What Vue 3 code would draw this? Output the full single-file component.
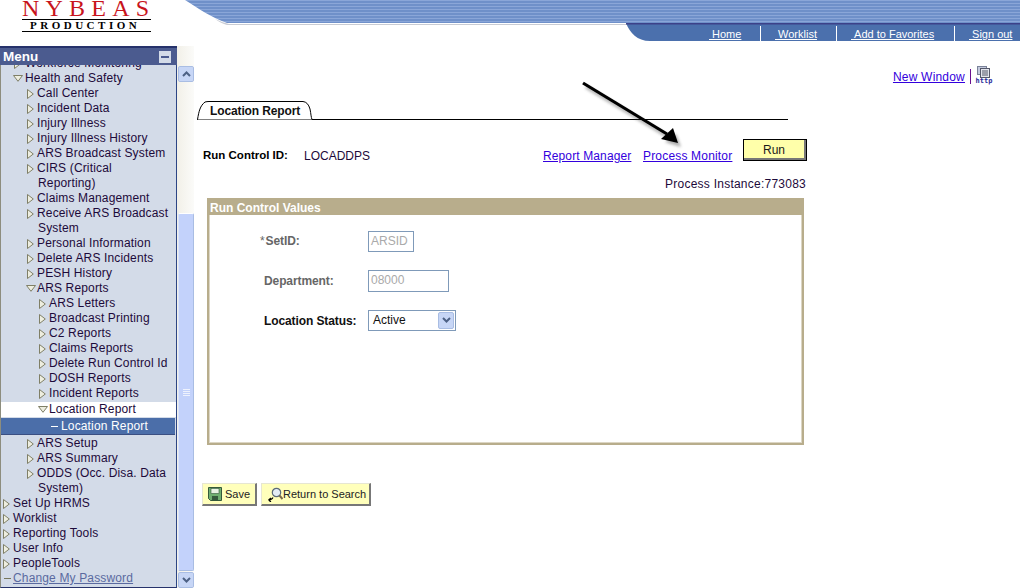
<script setup>
const rows = [
  { t: 'Workforce Monitoring', l: 1, a: 'r' },
  { t: 'Health and Safety', l: 1, a: 'd' },
  { t: 'Call Center', l: 2, a: 'r' },
  { t: 'Incident Data', l: 2, a: 'r' },
  { t: 'Injury Illness', l: 2, a: 'r' },
  { t: 'Injury Illness History', l: 2, a: 'r' },
  { t: 'ARS Broadcast System', l: 2, a: 'r' },
  { t: 'CIRS (Critical Reporting)', l: 2, a: 'r' },
  { t: 'Claims Management', l: 2, a: 'r' },
  { t: 'Receive ARS Broadcast System', l: 2, a: 'r' },
  { t: 'Personal Information', l: 2, a: 'r' },
  { t: 'Delete ARS Incidents', l: 2, a: 'r' },
  { t: 'PESH History', l: 2, a: 'r' },
  { t: 'ARS Reports', l: 2, a: 'd' },
  { t: 'ARS Letters', l: 3, a: 'r' },
  { t: 'Broadcast Printing', l: 3, a: 'r' },
  { t: 'C2 Reports', l: 3, a: 'r' },
  { t: 'Claims Reports', l: 3, a: 'r' },
  { t: 'Delete Run Control Id', l: 3, a: 'r' },
  { t: 'DOSH Reports', l: 3, a: 'r' },
  { t: 'Incident Reports', l: 3, a: 'r' },
  { t: 'Location Report', l: 3, a: 'd', open: true },
  { t: 'Location Report', l: 4, a: 'dash', current: true },
  { t: 'ARS Setup', l: 2, a: 'r' },
  { t: 'ARS Summary', l: 2, a: 'r' },
  { t: 'ODDS (Occ. Disa. Data System)', l: 2, a: 'r' },
  { t: 'Set Up HRMS', l: 0, a: 'r' },
  { t: 'Worklist', l: 0, a: 'r' },
  { t: 'Reporting Tools', l: 0, a: 'r' },
  { t: 'User Info', l: 0, a: 'r' },
  { t: 'PeopleTools', l: 0, a: 'r' },
  { t: 'Change My Password', l: 0, a: 'dash', link: true }
]
const navLinks = ['Home', 'Worklist', 'Add to Favorites', 'Sign out']
</script>

<template>
  <div class="page">
    <header class="top">
      <div class="logo">
        <div class="logo-name">NYBEAS</div>
        <div class="logo-sub">PRODUCTION</div>
      </div>
      <div class="banner">
        <svg class="banner-art" width="835" height="46" viewBox="0 0 835 46">
          <defs>
            <pattern id="stripe" width="4" height="3" patternUnits="userSpaceOnUse">
              <rect width="4" height="3" fill="#6f90c9" />
              <rect width="4" height="1" fill="#8aa6d8" />
            </pattern>
          </defs>
          <path d="M0 0 C14 9 26 17 42 23 L835 23 L835 0 Z" fill="url(#stripe)" />
          <path d="M30 19 C35 21 39 23 44 24 L442 24 L442 25 L42 25 C38 24 34 22 30 19 Z" fill="#c9ccd4" />
          <path d="M441 23 H835 V41 H465 C452 41 445 33 441 23 Z" fill="#4b70ad" />
          <rect x="441" y="23" width="394" height="1.5" fill="#3c4189" />
        </svg>
        <nav class="nav">
          <a v-for="n in navLinks" :key="n" class="nav-link">&nbsp;{{ n }}</a>
        </nav>
      </div>
    </header>

    <div class="body">
      <aside class="menu">
        <div class="menu-head">
          <span>Menu</span>
          <span class="collapse"><i></i></span>
        </div>
        <div class="menu-clip">
          <ul class="menu-list">
            <li
              v-for="(r, i) in rows"
              :key="i"
              class="row"
              :class="['lv' + r.l, { open: r.open, current: r.current, lk: r.link }]"
            >
              <span class="glyph" :class="r.a === 'r' ? 'g-right' : r.a === 'd' ? 'g-down' : 'g-dash'">
                <svg v-if="r.a === 'r'" width="7" height="10" viewBox="0 0 7 10">
                  <path d="M.5 .5 L6.3 5 L.5 9.5 Z" fill="#eeeee0" stroke="#7f7f66" />
                </svg>
                <svg v-else-if="r.a === 'd'" width="10" height="7" viewBox="0 0 10 7">
                  <path d="M.5 .5 H9.5 L5 6.3 Z" fill="#eeeee0" stroke="#7f7f66" />
                </svg>
                <i v-else class="dash"></i>
              </span>
              <span class="row-text">{{ r.t }}</span>
            </li>
          </ul>
        </div>
      </aside>

      <div class="scrollbar">
        <div class="sb-btn">
          <svg width="9" height="6" viewBox="0 0 9 6"><path d="M1 5 L4.5 1.5 L8 5" fill="none" stroke="#4d6185" stroke-width="2" /></svg>
        </div>
        <div class="sb-track">
          <div class="sb-thumb"><i></i><i></i><i></i><i></i></div>
        </div>
        <div class="sb-btn">
          <svg width="9" height="6" viewBox="0 0 9 6"><path d="M1 1 L4.5 4.5 L8 1" fill="none" stroke="#4d6185" stroke-width="2" /></svg>
        </div>
      </div>

      <main class="main">
        <svg class="pointer" width="120" height="80" viewBox="0 0 120 80">
          <defs>
            <filter id="soft" x="-20%" y="-20%" width="140%" height="140%"><feGaussianBlur stdDeviation="1.6" /></filter>
          </defs>
          <g transform="translate(3 4)" opacity=".4" filter="url(#soft)">
            <path d="M12 10 L96 61" stroke="#333" stroke-width="3.2" />
            <path d="M107 70 L91 65 L102 57 Z" fill="#333" />
          </g>
          <path d="M12 10 L96 61" stroke="#000" stroke-width="3.2" />
          <path d="M107 70 L90 66 L102 55 Z" fill="#000" />
        </svg>

        <div class="newwin">
          <a class="link nw">New Window</a>
          <i class="newwin-sep"></i>
          <span class="http">
            <svg width="14" height="12" viewBox="0 0 14 12">
              <rect x=".5" y=".5" width="9" height="8" fill="#c3c9dc" stroke="#7a8299" />
              <rect x="3.5" y="2.5" width="9" height="9" fill="#e2e4ec" stroke="#54586a" />
              <path d="M5 5 H11 M5 7 H11 M5 9 H11" stroke="#54586a" />
            </svg>
            <b>http</b>
          </span>
        </div>

        <div class="tabs">
          <div class="tab">
            <svg class="tab-shape" width="117" height="19" viewBox="0 0 117 19">
              <path d="M0.5 18.5 C2 10 3 5 8 1 Q10 .5 12 .5 H106 Q111 1 113 8 C114 13 114 16 115 18.5 H117" fill="#fff" stroke="#000" />
            </svg>
            <span class="tab-text">Location Report</span>
          </div>
        </div>

        <div class="runrow">
          <span class="strong rc-label">Run Control ID:</span>
          <span class="rc-value">LOCADDPS</span>
          <a class="link rm">Report Manager</a>
          <a class="link pm">Process Monitor</a>
          <button class="run">Run</button>
        </div>
        <div class="instance">Process Instance:773083</div>

        <section class="group">
          <div class="group-head">Run Control Values</div>
          <div class="group-body">
            <div class="field f1">
              <span class="lab muted"><span class="star">*</span>SetID:</span>
              <span class="box w46">ARSID</span>
            </div>
            <div class="field f2">
              <span class="lab muted pad4">Department:</span>
              <span class="box w81">08000</span>
            </div>
            <div class="field f3">
              <span class="lab pad4 dark">Location Status:</span>
              <span class="pick">
                <span class="pick-val">Active</span>
                <span class="pick-btn">
                  <svg width="9" height="6" viewBox="0 0 9 6"><path d="M1 1 L4.5 4.5 L8 1" fill="none" stroke="#4d6185" stroke-width="2" /></svg>
                </span>
              </span>
            </div>
          </div>
        </section>

        <div class="actions">
          <button class="act save">
            <svg width="14" height="14" viewBox="0 0 14 14">
              <path d="M.5 .5 H13.5 V13.5 H2.5 L.5 11.5 Z" fill="#6fae6f" stroke="#35593b" />
              <rect x="3" y="1.5" width="8" height="5" fill="#e8f2e2" stroke="#35593b" stroke-width=".6" />
              <rect x="4" y="9" width="6" height="4.5" fill="#35593b" />
            </svg>
            <span>Save</span>
          </button>
          <button class="act ret">
            <svg width="16" height="15" viewBox="0 0 16 15">
              <circle cx="9.5" cy="5.5" r="4.2" fill="#e3ecf5" stroke="#5b6a78" stroke-width="1.2" />
              <path d="M12.5 8.5 L15.5 12" stroke="#7a6a4a" stroke-width="2" />
              <path d="M6 10.5 C5 12.5 3.5 13 1.5 13 M1.5 13 L4 11 M1.5 13 L4 15" fill="none" stroke="#000" stroke-width="1.1" />
            </svg>
            <span>Return to Search</span>
          </button>
        </div>
      </main>
    </div>
  </div>
</template>

<style>
html, body { margin: 0; background: #fff; }
</style>

<style scoped>
* { box-sizing: border-box; }
.page {
  position: relative;
  width: 1020px;
  height: 588px;
  overflow: hidden;
  background: #fff;
  font: 12px/15px "Liberation Sans", Arial, sans-serif;
  color: #000;
}
.top { display: flex; height: 46px; }
.logo { width: 185px; padding-left: 22px; }
.logo-name {
  width: 129px;
  height: 20px;
  overflow: hidden;
  border-bottom: 1px solid #000;
  color: #c8141c;
  font: 24px/17px "Liberation Serif", serif;
  letter-spacing: 6.2px;
  white-space: nowrap;
}
.logo-sub {
  width: 129px;
  height: 12px;
  padding-left: 8px;
  border-bottom: 1px solid #000;
  font: bold 11px/11px "Liberation Serif", serif;
  letter-spacing: 3.5px;
  white-space: nowrap;
}
.banner { position: relative; flex: 1; }
.banner-art { position: absolute; left: 0; top: 0; }
.nav {
  position: absolute;
  right: 0;
  top: 26px;
  display: flex;
  height: 15px;
}
.nav-link {
  display: block;
  color: #fff;
  font-size: 11px;
  line-height: 17px;
  text-decoration: underline;
  white-space: nowrap;
}
.nav-link:nth-child(1) { width: 52px; padding-left: 1px; }
.nav-link:nth-child(2) { width: 76px; padding-left: 14px; }
.nav-link:nth-child(3) { width: 118px; padding-left: 14px; }
.nav-link:nth-child(4) { width: 66px; padding-left: 14px; }
.nav-link + .nav-link { border-left: 1px solid #fff; }

.body { display: flex; height: 542px; }
.menu {
  width: 177px;
  height: 542px;
  background: #d3dbe8;
  border-left: 1px solid #8d8d7e;
  border-right: 1px solid #2c4585;
  border-bottom: 1px solid #26326b;
  display: flex;
  flex-direction: column;
  flex: none;
}
.menu-head {
  display: flex;
  justify-content: space-between;
  align-items: center;
  height: 19px;
  margin-left: -1px;
  margin-right: -1px;
  padding: 0 6px 0 3px;
  background: #4b5b8f;
  border-top: 2px solid #26326b;
  color: #fff;
  font-size: 13.5px;
  font-weight: bold;
  line-height: 16px;
}
.collapse {
  display: flex;
  align-items: center;
  justify-content: center;
  width: 12px;
  height: 12px;
  background: #d3dbe8;
}
.collapse i { display: block; width: 8px; height: 2px; background: #4b5b8f; }
.menu-clip { flex: 1; overflow: hidden; }
.menu-list { list-style: none; margin: -9px 0 0; padding: 0; }
.row {
  display: flex;
  color: #1d0a3a;
  padding-right: 5px;
  letter-spacing: .15px;
}
.row-text { flex: 1; min-width: 0; }
.lv2 .row-text { padding-left: 1px; text-indent: -1px; }
.glyph {
  display: flex;
  align-items: center;
  justify-content: flex-start;
  flex: none;
  width: 12px;
  height: 15px;
}
.g-right { padding-left: 2px; }
.g-down { padding-left: 1px; }
.g-dash { justify-content: center; }
.lv1 { padding-left: 11px; }
.lv1 .glyph { width: 13px; }
.lv2 { padding-left: 24px; }
.lv3 { padding-left: 36px; }
.lv4 { padding-left: 47px; }
.row.open {
  background: #fff;
  margin-top: 1px;
  margin-bottom: 1px;
}
.row.current {
  height: 17px;
  line-height: 17px;
  margin-right: 1px;
  margin-bottom: 1px;
  background: #4b6ea9;
  color: #fff;
  border-bottom: 1px solid #3a4f82;
}
.row.current .glyph { height: 17px; }
.row.current .row-text { padding-left: 1px; }
.dash { display: block; width: 7px; height: 1px; background: #fff; }
.lk .dash { background: #77775c; }
.lk { color: #5a6aa0; text-decoration: underline; }
.lk .glyph { text-decoration: none; }

.scrollbar {
  width: 17px;
  height: 542px;
  padding: 20px 0 0 1px;
  display: flex;
  flex-direction: column;
  background: linear-gradient(90deg, #f2f0e8, #fbfbf9);
  flex: none;
}
.sb-btn {
  display: flex;
  align-items: center;
  justify-content: center;
  height: 16px;
  flex: none;
  background: #c7d6f6;
  border: 1px solid #eef2fb;
  border-radius: 2px;
  outline: 1px solid #a9bde3;
  outline-offset: -1px;
}
.sb-track { flex: 1; padding-top: 131px; padding-bottom: 1px; display: flex; }
.sb-thumb {
  flex: 1;
  display: flex;
  flex-direction: column;
  align-items: center;
  justify-content: center;
  gap: 1px;
  background: #c3d2fb;
  border: 1px solid #a9bde3;
  border-top-color: #fff;
  border-left-color: #dbe5fb;
  border-radius: 2px;
}
.sb-thumb i { display: block; width: 7px; height: 1px; background: #eef2fd; }

.main { position: relative; flex: 1; min-width: 0; }
.pointer { position: absolute; left: 377px; top: 27px; pointer-events: none; z-index: 2; }
.link { color: #3300dd; text-decoration: underline; white-space: nowrap; letter-spacing: .12px; }
.nw { letter-spacing: .2px; }
.pm { letter-spacing: .18px; }
.newwin {
  display: flex;
  justify-content: flex-end;
  align-items: flex-start;
  height: 55px;
  padding: 24px 28px 0 0;
}
.newwin-sep { width: 1px; height: 15px; margin: -1px 5px 0 5px; background: #6a0f8e; }
.http { display: flex; flex-direction: column; align-items: center; margin-top: -4px; width: 16px; }
.http b {
  font: bold 7px/7px "DejaVu Sans Mono", monospace;
  color: #2a2a9a;
}
.tabs {
  width: 591px;
  height: 19px;
  margin-left: 3px;
  border-bottom: 1px solid #000;
}
.tab { position: relative; width: 117px; height: 19px; }
.tab-shape { position: absolute; left: 0; top: 0; }
.tab-text {
  position: absolute;
  left: 13px;
  top: 3px;
  font-weight: bold;
  letter-spacing: -.12px;
  color: #111;
  white-space: nowrap;
}
.runrow {
  display: flex;
  align-items: flex-start;
  height: 22px;
  margin-top: 19px;
  padding-left: 9px;
}
.strong { font-weight: bold; }
.rc-label { margin-top: 9px; width: 101px; font-size: 11.5px; }
.rc-value { margin-top: 10px; width: 239px; color: #1d0a3a; }
.rm { margin-top: 10px; width: 100px; }
.pm { margin-top: 10px; width: 100px; }
.run {
  width: 64px;
  height: 22px;
  padding: 0;
  font: 12px/20px "Liberation Sans", Arial, sans-serif;
  color: #1a1a1a;
  background: #ffffaa;
  border: 1px solid #000;
  border-right: 3px solid #777;
  border-bottom: 3px solid #777;
  outline: 1px solid #000;
  outline-offset: -1px;
}
.instance {
  margin-top: 16px;
  width: 612px;
  text-align: right;
  color: #1d0a3a;
  letter-spacing: .24px;
}
.group {
  width: 597px;
  height: 247px;
  margin: 6px 0 0 13px;
  border: 2px solid #b8ad8c;
  border-top: 0;
  display: flex;
  flex-direction: column;
}
.group-head {
  height: 17px;
  margin: 0 -2px;
  padding-left: 3px;
  background: #b8ad8c;
  color: #fff;
  font-weight: bold;
  line-height: 20px;
}
.group-body { flex: 1; background: #fff; box-shadow: inset 1px -1px 0 #dcd6c4, inset -1px 0 0 #dcd6c4; overflow: hidden; }
.field { display: flex; align-items: center; }
.f1 { margin-top: 16px; height: 21px; }
.f2 { margin-top: 18px; height: 22px; }
.f3 { margin-top: 17px; height: 22px; }
.lab { width: 159px; padding-left: 51px; font-weight: bold; white-space: nowrap; letter-spacing: -.1px; }
.pad4 { padding-left: 55px; }
.muted { color: #666; }
.dark { color: #111; margin-top: 2px; }
.star { font-weight: normal; margin-right: 1px; }
.box {
  display: block;
  height: 100%;
  padding-left: 2px;
  border: 1px solid #7f9ab9;
  color: #aaa;
  line-height: 19px;
}
.w46 { width: 46px; }
.w81 { width: 81px; }
.pick {
  display: flex;
  align-items: center;
  width: 88px;
  height: 21px;
  padding: 0 1px 0 4px;
  border: 1px solid #7f9ab9;
  color: #111;
}
.pick-val { flex: 1; }
.pick-btn {
  display: flex;
  align-items: center;
  justify-content: center;
  width: 16px;
  height: 17px;
  background: #c7d6f6;
  border: 1px solid #a9bde3;
  border-radius: 2px;
}
.actions { display: flex; gap: 4px; margin: 38px 0 0 8px; }
.act {
  display: flex;
  align-items: center;
  gap: 3px;
  height: 23px;
  padding: 0 0 0 5px;
  font: 11px/15px "Liberation Sans", Arial, sans-serif;
  color: #222;
  background: #ffffbb;
  border: 1px solid #e6e6d2;
  border-right: 2px solid #777;
  border-bottom: 2px solid #777;
}
.save { width: 55px; }
.ret { width: 110px; gap: 0; }
</style>
